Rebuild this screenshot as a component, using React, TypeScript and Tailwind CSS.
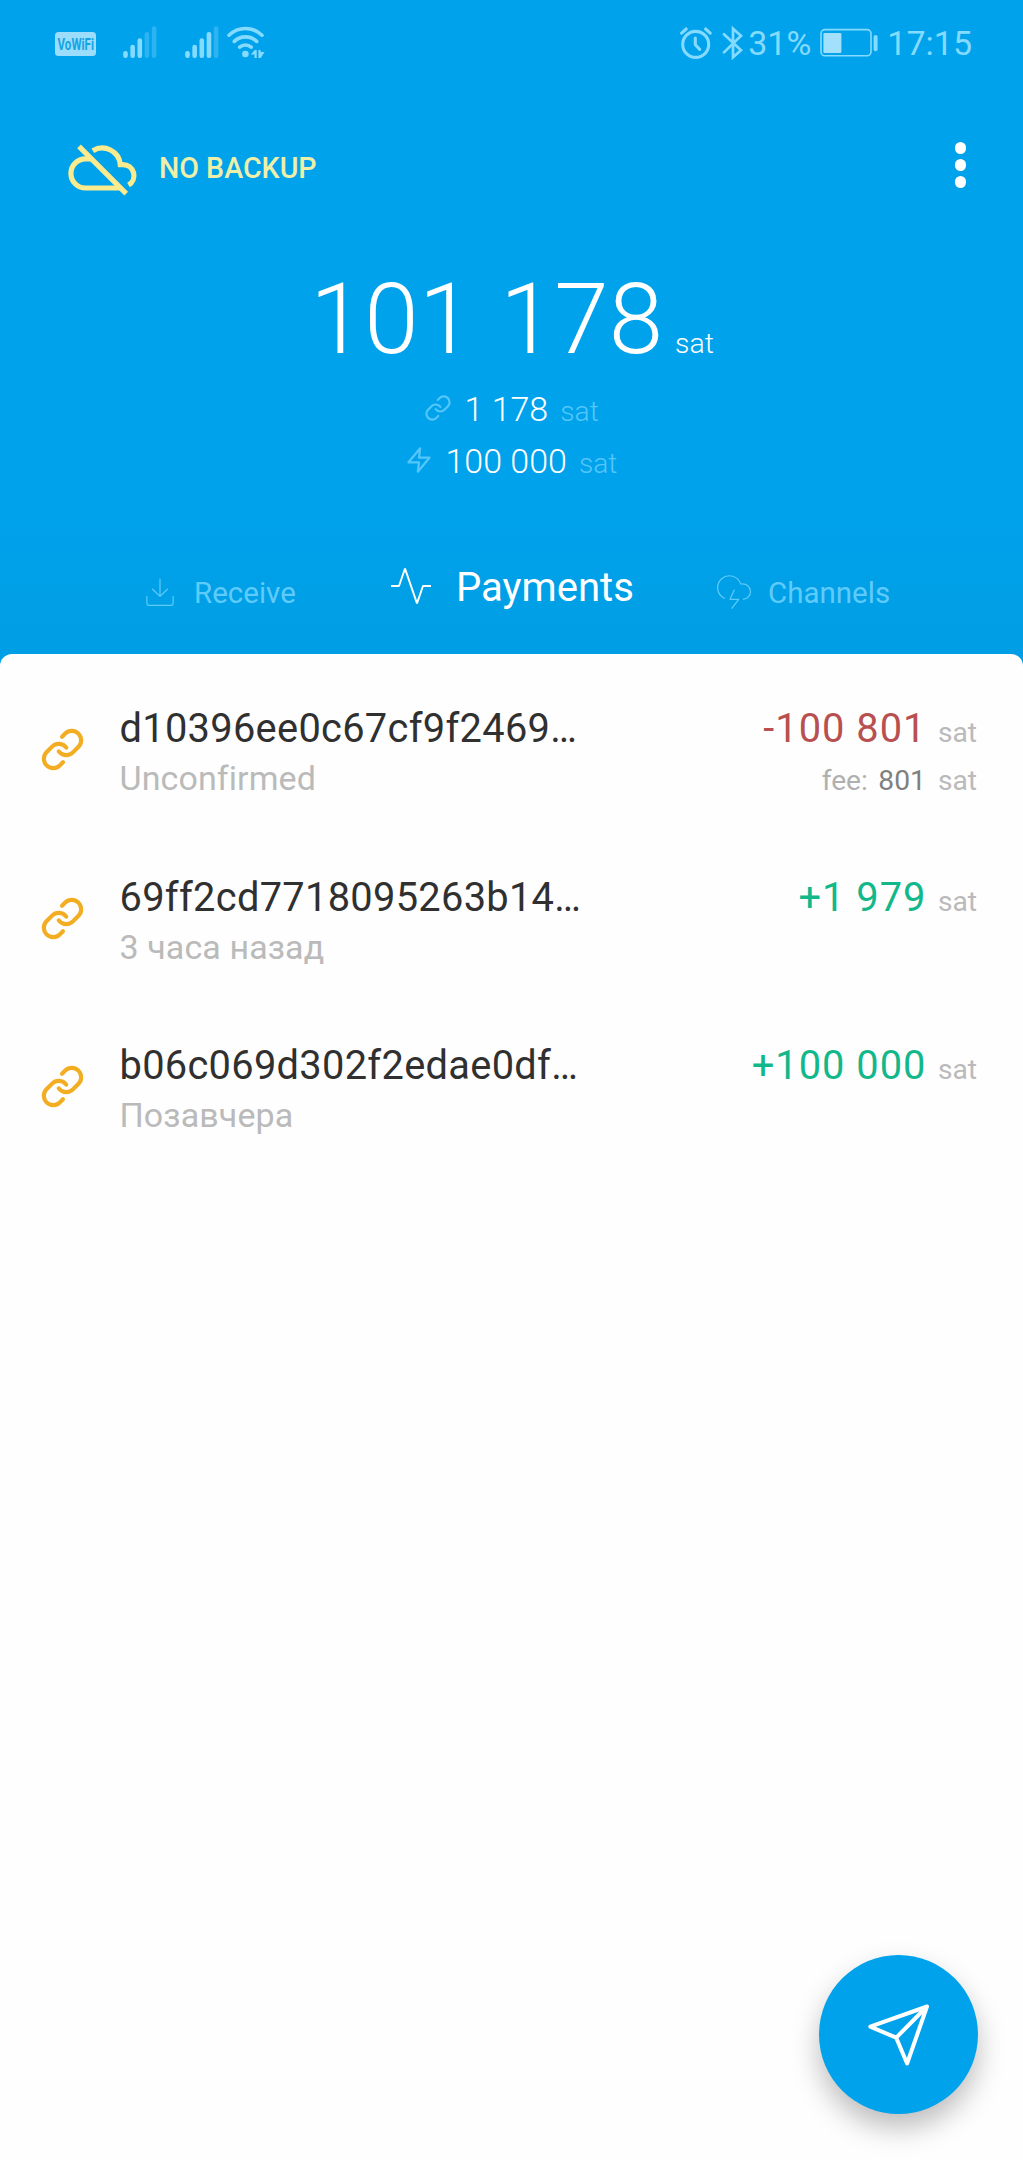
import React from "react";

const LINK_A = "M10 13a5 5 0 0 0 7.54.54l3-3a5 5 0 0 0-7.07-7.07l-1.72 1.71";
const LINK_B = "M14 11a5 5 0 0 0-7.54-.54l-3 3a5 5 0 0 0 7.07 7.07l1.71-1.71";

function LinkIcon({ className, strokeWidth }: { className: string; strokeWidth: number }) {
  return (
    <svg className={className} viewBox="0 0 24 24" fill="none" stroke="currentColor" strokeWidth={strokeWidth} strokeLinecap="round" strokeLinejoin="round">
      <path d={LINK_A} />
      <path d={LINK_B} />
    </svg>
  );
}

function Signal({ className, strong }: { className: string; strong: number }) {
  const tops = [25, 18.7, 12.3, 6, 0.3];
  return (
    <svg className={className} viewBox="0 0 34 32" fill="currentColor">
      {tops.map((t, i) => (
        <rect key={i} x={0.2 + i * 7.15} y={t} width={4.6} height={32 - t} rx={2.2} opacity={i < strong ? 1 : 0.33} />
      ))}
    </svg>
  );
}

function StatusBar() {
  return (
    <div className="flex h-[86px] items-start justify-between pl-[55px] pr-[51px] text-[#84dbff]">
      <div className="flex items-start">
        <div className="mt-[31.5px] flex h-[24px] w-[41px] items-center justify-center rounded-[3.5px] bg-[#9bddfb]">
          <span className="scale-x-[0.68] text-[17px] font-bold leading-[24px] text-[#14a4e6]">VoWiFi</span>
        </div>
        <Signal className="ml-[27px] mt-[26px] h-[32px] w-[34px]" strong={3} />
        <Signal className="ml-[28px] mt-[26px] h-[32px] w-[34px]" strong={4} />
        <svg className="ml-[7px] mt-[26px] h-[34px] w-[40px]" viewBox="226 26 40 34" fill="none" stroke="currentColor" strokeWidth="3.6" strokeLinecap="round">
          <path d="M229 35.2A23.5 23.5 0 0 1 262 35.2" />
          <path d="M234.3 41.4A16 16 0 0 1 256.7 41.4" />
          <path d="M239.6 47.2A9 9 0 0 1 251.3 47.2" />
          <circle cx="245.4" cy="54" r="3.3" fill="currentColor" stroke="none" />
          <path d="M250.8 54.6l4-4.6h1.9v8h-2.2v-3.4zM258.4 50h2.2v2h4l-3.9 6h-2.3z" fill="currentColor" stroke="none" />
        </svg>
      </div>
      <div className="flex items-start">
        <svg className="mt-[26px] h-[34px] w-[34px]" viewBox="679 26 34 34" fill="none" stroke="currentColor" strokeWidth="3.1" strokeLinecap="round" strokeLinejoin="round">
          <circle cx="695.7" cy="44.4" r="13" />
          <path d="M695.3 38v6.8l4.4 4.6M681.6 33.2l4.6-4.2M705.6 29l4.6 4.2" />
        </svg>
        <svg className="ml-[9px] mt-[26px] h-[34px] w-[22px]" viewBox="722 26 22 34" fill="none" stroke="currentColor" strokeWidth="2.7" strokeLinecap="round" strokeLinejoin="miter">
          <path d="M724 34.2L741 50.2L733 57.3V28.7L741 35.8L724 52.4" />
        </svg>
        <span className="ml-[4px] mt-[23px] text-[34px] leading-[40px]">31%</span>
        <svg className="ml-[8px] mt-[28px] h-[30px] w-[60px]" viewBox="819 28 60 30">
          <rect x="821" y="29.6" width="50" height="26.2" rx="4" fill="none" stroke="currentColor" strokeWidth="1.6" />
          <rect x="823.4" y="33" width="18" height="20" rx="1" fill="#a2e0fc" />
          <rect x="873.6" y="35" width="4" height="16.3" rx="2" fill="currentColor" />
        </svg>
        <span className="ml-[8px] mt-[23px] text-[34px] leading-[40px]">17:15</span>
      </div>
    </div>
  );
}

function TopBar() {
  return (
    <div className="flex h-[114px] items-start pl-[66px] text-[#fbeb8f]">
      <svg className="mt-[56px] h-[56px] w-[72px]" viewBox="66 142 72 56" fill="none" stroke="currentColor" strokeWidth="5.2">
        <path d="M91 158.8H85.5a14.6 14.6 0 0 0 0 29.2H121" />
        <path d="M92.8 150.8A18 18 0 0 1 120.3 164.6H123A11 11 0 0 1 128.5 185.1" />
        <path d="M79 146.4L126.2 193.6" />
      </svg>
      <span className="ml-[21px] mt-[64px] text-[28.6px] font-medium leading-[36px] text-[#eeefa8]">NO BACKUP</span>
      <div className="ml-auto mr-[57px] mt-[56px] flex flex-col gap-[5.7px]">
        <span className="size-[11.5px] rounded-full bg-white" />
        <span className="size-[11.5px] rounded-full bg-white" />
        <span className="size-[11.5px] rounded-full bg-white" />
      </div>
    </div>
  );
}

function Balances() {
  return (
    <div className="flex h-[300px] flex-col font-light text-white">
      <div className="mt-[61.5px] flex h-[121px] items-baseline whitespace-nowrap pl-[310px] leading-[116px]">
        <span className="text-[98px] [word-spacing:3px]">101 178</span>
        <span className="ml-[12px] text-[28.4px]">sat</span>
      </div>
      <div className="flex h-[52px] items-baseline whitespace-nowrap pl-[424px] leading-[52px]">
        <LinkIcon className="size-[28px] translate-y-[1px] text-[#55c6fa]" strokeWidth={1.9} />
        <span className="ml-[12.5px] text-[34px]">1 178</span>
        <span className="ml-[12px] text-[28.2px] text-[#55c6fa]">sat</span>
      </div>
      <div className="flex h-[52px] items-baseline whitespace-nowrap pl-[405px] leading-[52px]">
        <svg className="size-[28px] translate-y-[1px] text-[#55c6fa]" viewBox="0 0 24 24" fill="none" stroke="currentColor" strokeWidth="1.9" strokeLinecap="round" strokeLinejoin="round">
          <path d="M13 2L3 14h9l-1 8 10-12h-9l1-8z" />
        </svg>
        <span className="ml-[12.5px] text-[34px]">100 000</span>
        <span className="ml-[12px] text-[28.2px] text-[#55c6fa]">sat</span>
      </div>
    </div>
  );
}

function Tabs() {
  return (
    <div className="flex h-[154px] items-start whitespace-nowrap pl-[146px] text-[#5fcbfb]">
      <svg className="mt-[78px] h-[30px] w-[30px]" viewBox="0 0 30 30" fill="none" stroke="currentColor" strokeWidth="1.2" strokeLinecap="round" strokeLinejoin="round">
        <path d="M14 1v17.3M6.6 11.2L14 18.4l7.4-7.2M.9 18.6v6.6a2.2 2.2 0 0 0 2.2 2.2h21.8a2.2 2.2 0 0 0 2.2-2.2v-6.6" />
      </svg>
      <span className="ml-[18px] mt-[75px] w-[110px] text-[29.5px] leading-[36px]">Receive</span>
      <svg className="ml-[83px] mt-[61.5px] size-[48px] text-white" viewBox="0 0 24 24" fill="none" stroke="currentColor" strokeWidth="0.95" strokeLinejoin="bevel">
        <path d="M22 12h-4l-3 8.7L9 3.3l-3 8.7H2" />
      </svg>
      <span className="ml-[21px] mt-[64px] w-[200px] text-[40.1px] leading-[48px] text-white">Payments</span>
      <svg className="ml-[60px] mt-[75px] size-[36px]" viewBox="0 0 36 36" fill="none" stroke="currentColor" strokeWidth="1.2" strokeLinecap="round" strokeLinejoin="round">
        <path d="M8.5 23.3A11.8 11.8 0 1 1 24.7 9h1.5A7.6 7.6 0 0 1 27.4 24.2M18.3 15L14 24.3h8.7L16 33.2" />
      </svg>
      <span className="ml-[16px] mt-[75px] text-[29.5px] leading-[36px]">Channels</span>
    </div>
  );
}

type Tx = { id: string; when: string; amount: string; negative?: boolean; fee?: string };

const txs: Tx[] = [
  { id: "d10396ee0c67cf9f2469…", when: "Unconfirmed", amount: "-100 801", negative: true, fee: "801" },
  { id: "69ff2cd7718095263b14…", when: "3 часа назад", amount: "+1 979" },
  { id: "b06c069d302f2edae0df…", when: "Позавчера", amount: "+100 000" },
];

function Row({ tx }: { tx: Tx }) {
  return (
    <div className="flex h-[168.6px] items-start whitespace-nowrap pl-[40px] pr-[46px]">
      <LinkIcon className="mt-[22px] size-[45px] text-[#f2ad22]" strokeWidth={2.2} />
      <div className="ml-[34.5px] flex-1">
        <div className="h-[49px] text-[39.8px] leading-[48px] tracking-[0.3px] text-[#303030]">{tx.id}</div>
        <div className="text-[34px] leading-[48px] tracking-[0.1px] text-[#bababa]">{tx.when}</div>
      </div>
      <div className="flex flex-col items-end">
        <div className="flex h-[49px] items-baseline leading-[48px]">
          <span className={tx.negative ? "text-[39.8px] tracking-[1px] text-[#b85050]" : "text-[39.8px] tracking-[1px] text-[#12b78a]"}>{tx.amount}</span>
          <span className="ml-[11.5px] text-[28.2px] text-[#bababa]">sat</span>
        </div>
        {tx.fee && (
          <div className="flex items-baseline text-[28.2px] leading-[53px] text-[#b0b0b0]">
            <span>fee:</span>
            <span className="ml-[10.5px] text-[#808080]">{tx.fee}</span>
            <span className="ml-[12px] text-[#bababa]">sat</span>
          </div>
        )}
      </div>
    </div>
  );
}

export default function App() {
  return (
    <div className="relative h-[2160px] w-[1023px] overflow-hidden bg-[#009ee4] font-['Roboto',sans-serif]">
      <div className="h-[654px] bg-linear-to-b from-[#00a2eb] from-80% to-[#009ee4]">
        <StatusBar />
        <TopBar />
        <Balances />
        <Tabs />
      </div>
      <div className="h-[1506px] rounded-t-[12px] bg-[#fefefe] pt-[51px]">
        {txs.map((t) => (
          <Row key={t.id} tx={t} />
        ))}
      </div>
      <button aria-label="Send" className="absolute bottom-[46px] right-[45px] flex size-[159px] items-center justify-center rounded-full bg-[#00a2eb] shadow-[0_14px_28px_rgba(0,0,0,0.26)]">
        <svg className="size-[70px]" viewBox="863.5 2000 70 70" fill="none" stroke="white" strokeWidth="4" strokeLinecap="round" strokeLinejoin="round">
          <path d="M926.5 2006.5L869.8 2026.7L895.7 2037.7L906.6 2063.5ZL895.7 2037.7" />
        </svg>
      </button>
    </div>
  );
}
